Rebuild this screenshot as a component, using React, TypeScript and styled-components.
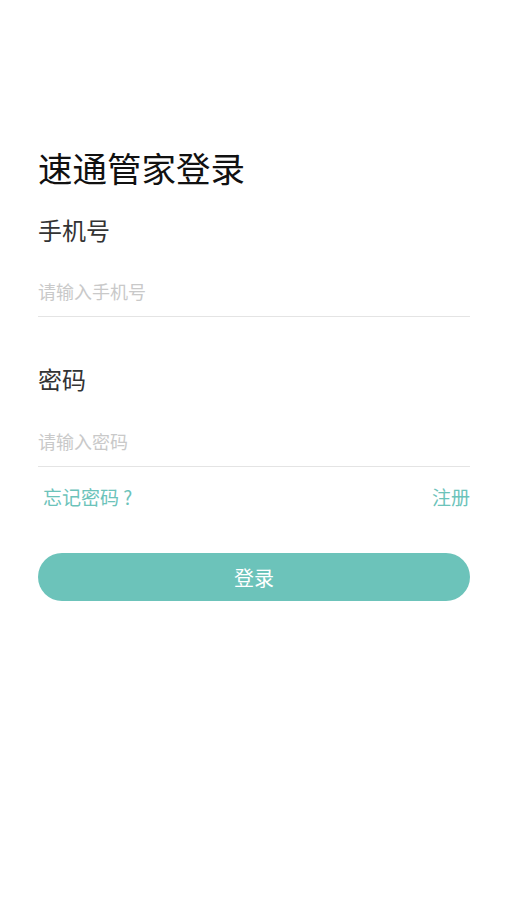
import styled, { createGlobalStyle } from "styled-components";

const GlobalStyle = createGlobalStyle`
    html, body {
        margin: 0;
        padding: 0;
        background: #ffffff;
        font-family: "Noto Sans CJK SC", "Noto Sans", sans-serif;
    }
`;

const Page = styled.div`
    box-sizing: border-box;
    width: 507px;
    min-height: 900px;
    padding: 147px 37px 0 38px;
    display: flex;
    flex-direction: column;
`;

const Title = styled.h1`
    margin: 0;
    font-size: 34.5px;
    line-height: 40px;
    font-weight: 400;
    color: #111111;
`;

const Label = styled.div<{ $gap: number }>`
    margin-top: ${(p) => p.$gap}px;
    font-size: 24px;
    line-height: 32px;
    color: #333333;
`;

const Field = styled.input<{ $gap: number }>`
    box-sizing: border-box;
    margin-top: ${(p) => p.$gap}px;
    width: 100%;
    height: 50px;
    padding: 0 0 2px;
    border: none;
    border-bottom: 1px solid #e4e4e4;
    outline: none;
    background: transparent;
    font-family: inherit;
    font-size: 18px;
    color: #333333;

    &::placeholder {
        color: #c9c9c9;
    }
`;

const LinkRow = styled.div`
    margin-top: 17px;
    display: flex;
    justify-content: space-between;
    align-items: center;
    font-size: 19px;
    line-height: 26px;
`;

const TextLink = styled.a<{ $inset?: number }>`
    color: #6cc3ba;
    text-decoration: none;
    padding-left: ${(p) => p.$inset ?? 0}px;
    cursor: pointer;
`;

const LoginButton = styled.button`
    margin-top: 43px;
    width: 100%;
    height: 48px;
    border: none;
    border-radius: 24px;
    background: #6cc3ba;
    color: #ffffff;
    font-family: inherit;
    font-size: 20px;
    cursor: pointer;
`;

export default function App() {
    return (
        <>
            <GlobalStyle />
            <Page>
                <Title>速通管家登录</Title>
                <Label $gap={27}>手机号</Label>
                <Field $gap={21} type="tel" placeholder="请输入手机号" />
                <Label $gap={46}>密码</Label>
                <Field $gap={22} type="password" placeholder="请输入密码" />
                <LinkRow>
                    <TextLink $inset={5}>忘记密码 ?</TextLink>
                    <TextLink>注册</TextLink>
                </LinkRow>
                <LoginButton>登录</LoginButton>
            </Page>
        </>
    );
}
